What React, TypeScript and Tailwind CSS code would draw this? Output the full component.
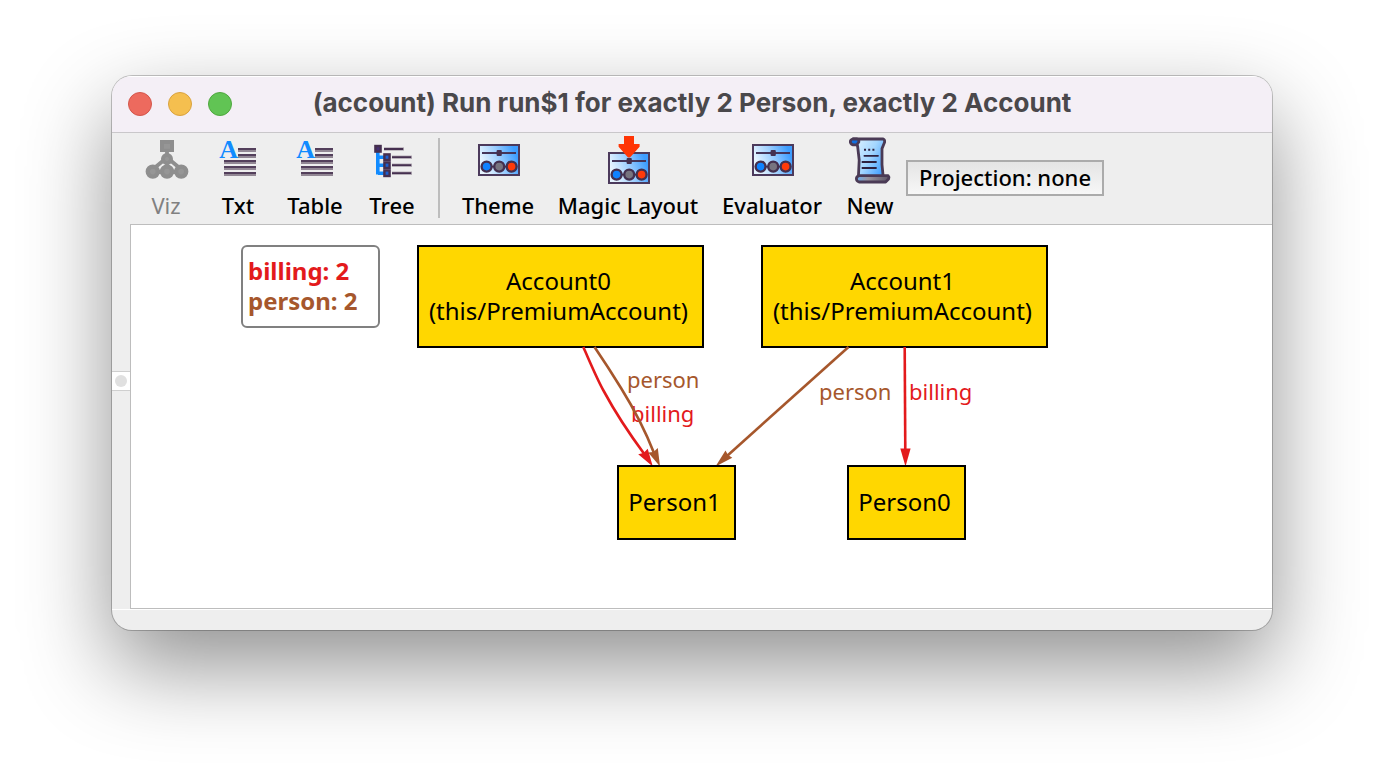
import type { ReactNode } from "react";

const RED = "#e31a1c";
const BROWN = "#a6572c";

function Icon({ children }: { children: ReactNode }) {
  return (
    <svg viewBox="0 0 24 24" className="h-12 w-12 shrink-0" aria-hidden="true">
      {children}
    </svg>
  );
}

function VizIcon() {
  return (
    <Icon>
      <g fill="#8e8e8e" stroke="#8e8e8e">
        <path d="M12.5 7v3M11 12l-6 5M14 12l6 5M12.5 13v4M5 18h15" fill="none" strokeWidth="1.9" />
        <rect x="9.5" y="2.5" width="6" height="5" />
        <circle cx="12.5" cy="11.5" r="2.5" />
        <circle cx="5.4" cy="17.8" r="3.1" />
        <circle cx="12.5" cy="17.8" r="3.1" />
        <circle cx="19.6" cy="17.8" r="3.1" />
      </g>
      <g fill="#969696">
        <rect x="11" y="4" width="3" height="2.4" />
        <circle cx="5.4" cy="17.8" r="1.4" />
        <circle cx="12.5" cy="17.8" r="1.4" />
        <circle cx="19.6" cy="17.8" r="1.4" />
        <circle cx="12.5" cy="11.5" r="1" />
      </g>
    </Icon>
  );
}

function TextIcon() {
  return (
    <Icon>
      <path d="M12 7.5h9M12 10.5h9M5 13.5h16M5 16.5h16M5 19.5h16" stroke="#928794" />
      <path d="M12 6.5h9M12 9.5h9M5 12.5h16M5 15.5h16M5 18.5h16" stroke="#533f5b" />
      <text x="7.3" y="11" textAnchor="middle" fontFamily="Liberation Serif, serif" fontWeight="700" fontSize="13" fill="#118bff">
        A
      </text>
    </Icon>
  );
}

function TreeIcon() {
  return (
    <Icon>
      <path d="M4.9 8v11.2M5 10.6h3M5 14.6h3M5 18.6h3" stroke="#118bff" strokeWidth="1.8" fill="none" />
      <path d="M8 6.5h10M12 10.6h10M12 14.6h10M12 18.6h10" stroke="#b5aeb7" strokeWidth="1.8" />
      <path d="M8 6.5h9.6M12 10.6h9.6M12 14.6h9.6M12 18.6h9.6" stroke="#452f4f" strokeWidth=".9" />
      <g fill="#1c5fd0" stroke="#452f4f" strokeWidth="1.2">
        <rect x="3.7" y="5" width="2.6" height="2.8" fill="#452f70" />
        <rect x="8.2" y="9.2" width="2.6" height="2.8" />
        <rect x="8.2" y="13.2" width="2.6" height="2.8" />
        <rect x="8.2" y="17.2" width="2.6" height="2.8" />
      </g>
    </Icon>
  );
}

function Panel({ id, y }: { id: string; y: number }) {
  return (
    <g transform={`translate(2 ${y})`}>
      <defs>
        <linearGradient id={id} x1="0" y1="0.3" x2="1" y2="0">
          <stop offset="0" stopColor="#e6f4ff" />
          <stop offset=".4" stopColor="#a0d0ff" />
          <stop offset=".85" stopColor="#3d9dff" />
        </linearGradient>
      </defs>
      <rect x=".5" y=".5" width="20" height="15" fill={`url(#${id})`} stroke="#4c3a5c" />
      <path d="M2 4.5h17" stroke="#44355a" strokeWidth=".9" />
      <rect x="9.3" y="3" width="2.6" height="3" rx=".5" fill="#44304f" />
      <path d="M2 11.3h17" stroke="#44304f" strokeWidth=".8" />
      <g stroke="#44304f" strokeWidth="1.2">
        <circle cx="4.3" cy="11.3" r="2.5" fill="#0f82ff" />
        <circle cx="10.6" cy="11.3" r="2.5" fill="#77747f" />
        <circle cx="16.8" cy="11.3" r="2.5" fill="#ff3a0a" />
      </g>
    </g>
  );
}

function ThemeIcon() {
  return (
    <Icon>
      <Panel id="panel-theme" y={4} />
    </Icon>
  );
}

function EvaluatorIcon() {
  return (
    <Icon>
      <Panel id="panel-evaluator" y={4} />
    </Icon>
  );
}

function MagicIcon() {
  return (
    <Icon>
      <Panel id="panel-magic" y={8} />
      <path d="M10 0h5v4h2.8v1.4L13 10.8h-1L7.3 5.4V4H10z" fill="#ff3505" />
    </Icon>
  );
}

function ScrollIcon() {
  return (
    <Icon>
      <defs>
        <linearGradient id="paper" x1="0" y1="0.2" x2="1" y2="0.8">
          <stop offset="0" stopColor="#d9f0ff" />
          <stop offset=".5" stopColor="#a4d6ff" />
          <stop offset="1" stopColor="#3d9dff" />
        </linearGradient>
        <linearGradient id="roll" x1="0" y1="0" x2="1" y2="0">
          <stop offset="0" stopColor="#6aaef0" />
          <stop offset=".35" stopColor="#9a96a0" />
          <stop offset="1" stopColor="#5d5566" />
        </linearGradient>
      </defs>
      <g stroke="#4a3a55" strokeWidth="1.4" strokeLinejoin="round">
        <path d="M3.5 1.5H18.6q.9.4.7 1.6L18 6.3v8l.6 6.200H6.200L6.600 12 5.800 5z" fill="url(#paper)" />
        <path d="M3.400 1.500q-1.400.3-1.200 1.700.4 1.600 3.200 1.200l1-1.400q.2-1.300-.8-1.500z" fill="#0f6fe0" />
        <path d="M6.500 19.800h14.500q.7.700.3 1.700L19.800 23H6.500q-1.300-.4-1.300-1.600 0-1.200 1.300-1.600z" fill="url(#roll)" />
      </g>
      <path d="M9 6.900h1M11.100 6.900h1M13.200 6.900h1" stroke="#2d2140" />
      <path d="M9.200 9.900h6.800M8.200 13h6.800M8.200 16h6.800" stroke="#2d2140" strokeWidth=".9" strokeLinecap="round" />
    </Icon>
  );
}

function Tool({ label, width, disabled, children }: { label: string; width: string; disabled?: boolean; children: ReactNode }) {
  return (
    <button
      type="button"
      disabled={disabled}
      className={`flex shrink-0 flex-col items-center gap-1 whitespace-nowrap text-[22px] font-medium leading-[34px] text-black disabled:font-normal disabled:text-[#808080] ${width}`}
    >
      {children}
      <span>{label}</span>
    </button>
  );
}

function Node({ lines, place }: { lines: string[]; place: string }) {
  return (
    <div className={`absolute flex flex-col items-center justify-center whitespace-nowrap border-2 border-black bg-[#ffd700] pb-px pr-1 text-2xl leading-[30px] text-black ${place}`}>
      {lines.map((line) => (
        <span key={line}>{line}</span>
      ))}
    </div>
  );
}

function Edges() {
  return (
    <svg className="absolute left-0 top-0 h-[383px] w-[1141px]" viewBox="131 225 1141 383" aria-hidden="true">
      <g fill="none" strokeWidth="2.6">
        <path d="M583.3 347C590 362 597 379 604 391.500C615 412 628 432 645 455" stroke={RED} />
        <path d="M594.500 347C604 361 613 375 621 388C634 409 645 430 654 453" stroke={BROWN} />
        <path d="M848.500 347L727 456" stroke={BROWN} />
        <path d="M904.700 347L905.300 452" stroke={RED} />
      </g>
      <path d="M652.800 466.500L638.200 454.300L643.500 453L647.700 448.700z" fill={RED} />
      <path d="M660 466.500L648.200 452.500L653.500 452L657.800 448z" fill={BROWN} />
      <path d="M715.500 466.500L725.500 450.500L728 455L732.300 457.800z" fill={BROWN} />
      <path d="M905.500 466.500L900.300 448.500H910.600z" fill={RED} />
    </svg>
  );
}

export default function App() {
  return (
    <main className="min-h-screen bg-white px-28 pb-36 pt-19 font-['Noto_Sans',sans-serif]">
      <section className="overflow-hidden rounded-[20px] bg-[#eeeeee] shadow-[0_0_0_1px_rgba(0,0,0,0.22),0_36px_88px_rgba(0,0,0,0.44)]">
        <header className="relative flex h-14 items-center justify-center bg-[#f4eff6] pb-0.5 shadow-[inset_0_1px_0_white]">
          <div className="absolute left-4 top-4 flex gap-4">
            <button type="button" aria-label="Close" className="size-6 rounded-full border border-[#d3564b] bg-[#ed6a5e]" />
            <button type="button" aria-label="Minimize" className="size-6 rounded-full border border-[#d9a23f] bg-[#f5bf4f]" />
            <button type="button" aria-label="Zoom" className="size-6 rounded-full border border-[#4fa73f] bg-[#61c454]" />
          </div>
          <h1 className="whitespace-nowrap font-['Inter',sans-serif] text-[26px] font-bold leading-8 text-[#4a484b]">
            (account) Run run$1 for exactly 2 Person, exactly 2 Account
          </h1>
        </header>

        <nav className="flex items-start gap-6 border-t border-[#c9c7ca] pb-0.5 pl-[30px] pt-[3px]">
          <Tool label="Viz" width="w-12" disabled><VizIcon /></Tool>
          <Tool label="Txt" width="w-12"><TextIcon /></Tool>
          <Tool label="Table" width="w-[58px]"><TextIcon /></Tool>
          <Tool label="Tree" width="w-12"><TreeIcon /></Tool>
          <div className="-mx-0.5 mt-0.5 h-20 w-0.5 shrink-0 bg-[#bdbdbd]" />
          <Tool label="Theme" width="w-[72px]"><ThemeIcon /></Tool>
          <Tool label="Magic Layout" width="w-[140px]"><MagicIcon /></Tool>
          <Tool label="Evaluator" width="w-[100px]"><EvaluatorIcon /></Tool>
          <div className="flex items-start gap-3">
            <Tool label="New" width="w-12"><ScrollIcon /></Tool>
            <button
              type="button"
              className="mt-6 h-9 w-[198px] whitespace-nowrap border-2 border-[#ababab] bg-linear-to-b from-[#e4e4e4] to-[#f7f7f7] pb-0.5 text-[22px] font-medium leading-[30px] text-black"
            >
              Projection: none
            </button>
          </div>
        </nav>

        <div className="flex">
          <div className="flex w-[18px] shrink-0 items-center pb-[74px]">
            <div className="mt-0.5 flex h-5 w-full items-center justify-center border-y border-[#cfcfcf] bg-white">
              <span className="size-3 rounded-full bg-[#e0e0e0]" />
            </div>
          </div>
          <div className="relative h-[385px] grow overflow-hidden border-y border-l border-[#bdbdbd] bg-white">
            <div className="absolute left-[110px] top-5 h-[83px] w-[139px] whitespace-nowrap rounded-md border-2 border-[#808080] bg-white px-[5px] py-[9px] text-2xl font-bold leading-[30px]">
              <p className="text-[#e31a1c]">billing: 2</p>
              <p className="text-[#a6572c]">person: 2</p>
            </div>
            <Node lines={["Account0", "(this/PremiumAccount)"]} place="left-[286px] top-5 h-[103px] w-[287px]" />
            <Node lines={["Account1", "(this/PremiumAccount)"]} place="left-[630px] top-5 h-[103px] w-[287px]" />
            <div className="text-[22px] leading-[30px]">
              <span className="absolute left-[496px] top-[139px] text-[#a6572c]">person</span>
              <span className="absolute left-[500px] top-[173px] text-[#e31a1c]">billing</span>
              <span className="absolute left-[688px] top-[151px] text-[#a6572c]">person</span>
              <span className="absolute left-[778px] top-[151px] text-[#e31a1c]">billing</span>
            </div>
            <Edges />
            <Node lines={["Person1"]} place="left-[486px] top-[240px] h-[75px] w-[119px]" />
            <Node lines={["Person0"]} place="left-[716px] top-[240px] h-[75px] w-[119px]" />
          </div>
        </div>
        <footer className="h-[21px] border-t border-white" />
      </section>
    </main>
  );
}
